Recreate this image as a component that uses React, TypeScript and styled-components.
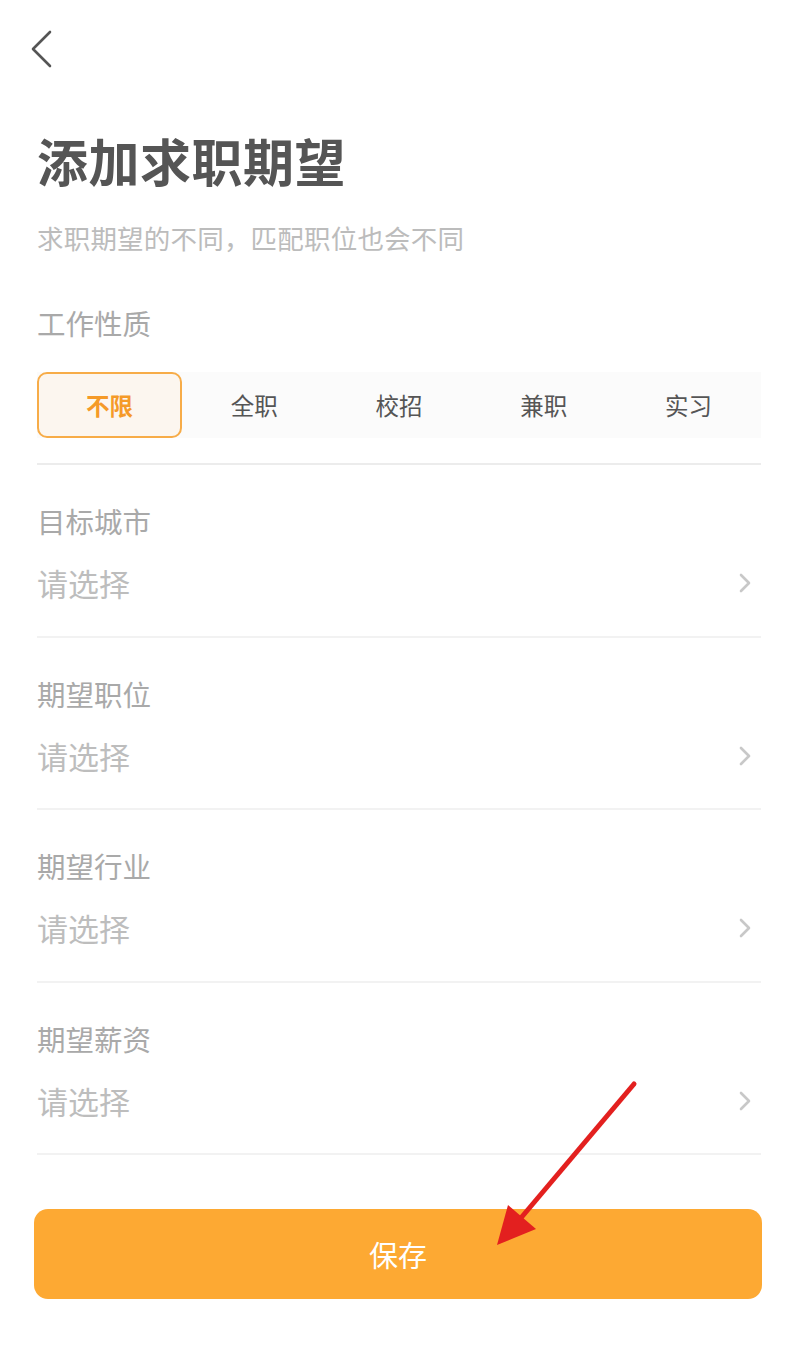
import React from 'react';
import styled, { createGlobalStyle } from 'styled-components';

const GlobalStyle = createGlobalStyle`
  html, body {
    margin: 0;
    padding: 0;
    background: #fff;
  }
  body {
    font-family: "Noto Sans CJK SC", "Noto Sans", sans-serif;
  }
`;

const Page = styled.div`
  position: relative;
  width: 790px;
  min-height: 1354px;
  box-sizing: border-box;
  padding: 0 28px 0 37px;
  background: #fff;
`;

const Header = styled.div`
  height: 100px;
  display: flex;
  align-items: center;
  margin-left: -8px;
`;

const BackButton = styled.button`
  border: 0;
  background: none;
  padding: 0;
  width: 24px;
  height: 44px;
  display: flex;
  align-items: center;
  justify-content: center;
  color: #555;
  margin-top: -2px;
`;

const Title = styled.h1`
  margin: 29px 0 0;
  font-size: 51px;
  line-height: 62px;
  font-weight: 700;
  color: #555;
  letter-spacing: 0.5px;
`;

const Subtitle = styled.p`
  margin: 31px 0 0;
  font-size: 26.5px;
  line-height: 32px;
  color: #bcbcbc;
  letter-spacing: 0.2px;
`;

const Label = styled.div`
  font-size: 28.5px;
  line-height: 34px;
  color: #a9a9a9;
`;

const TypeLabel = styled(Label)`
  margin-top: 52px;
`;

const ChipRow = styled.div`
  margin-top: 32px;
  display: grid;
  grid-template-columns: repeat(5, 1fr);
  background: #fbfbfb;
  width: 724px;
`;

const Chip = styled.div<{ $active?: boolean }>`
  height: 66px;
  box-sizing: border-box;
  display: flex;
  align-items: center;
  justify-content: center;
  font-size: 23.5px;
  border-radius: 10px;
  border: 2px solid ${p => (p.$active ? '#f7ac48' : 'transparent')};
  background: ${p => (p.$active ? '#fcf6ef' : 'transparent')};
  color: ${p => (p.$active ? '#f59a28' : '#555')};
  font-weight: ${p => (p.$active ? 700 : 400)};
`;

const Divider = styled.div`
  height: 2px;
  background: #ececec;
  width: 724px;
`;

const TypeDivider = styled(Divider)`
  margin-top: 25px;
`;

const Field = styled.div`
  height: 172.5px;
  box-sizing: border-box;
  padding-top: 39px;
  display: flex;
  flex-direction: column;
  border-bottom: 2px solid #f2f2f2;
  width: 724px;
`;

const SelectRow = styled.div`
  margin-top: 26px;
  display: flex;
  align-items: center;
  justify-content: space-between;
  padding-right: 10px;
`;

const Placeholder = styled.span`
  font-size: 31px;
  line-height: 38px;
  color: #bdbdbd;
`;

const SaveButton = styled.button`
  margin: 54px 0 0 -3px;
  width: 728px;
  height: 90px;
  border: 0;
  border-radius: 14px;
  background: #fda933;
  color: #fff;
  font-family: inherit;
  font-size: 29px;
  display: flex;
  align-items: center;
  justify-content: center;
`;

const Annotation = styled.svg`
  position: absolute;
  left: 0;
  top: 0;
  pointer-events: none;
`;

const ChevronLeft = () => (
  <svg width="24" height="40" viewBox="0 0 24 40" fill="none">
    <path d="M21 3 L4 20 L21 37" stroke="currentColor" strokeWidth="2.6" strokeLinecap="round" strokeLinejoin="round" />
  </svg>
);

const ChevronRight = () => (
  <svg width="12" height="20" viewBox="0 0 12 20" fill="none">
    <path d="M2 2 L10 10 L2 18" stroke="#c8c8c8" strokeWidth="2.6" strokeLinecap="round" strokeLinejoin="round" />
  </svg>
);

const jobTypes = ['不限', '全职', '校招', '兼职', '实习'];
const fields = ['目标城市', '期望职位', '期望行业', '期望薪资'];

export default function App() {
  return (
    <>
      <GlobalStyle />
      <Page>
        <Header>
          <BackButton aria-label="返回">
            <ChevronLeft />
          </BackButton>
        </Header>
        <Title>添加求职期望</Title>
        <Subtitle>求职期望的不同，匹配职位也会不同</Subtitle>
        <TypeLabel>工作性质</TypeLabel>
        <ChipRow>
          {jobTypes.map((t, i) => (
            <Chip key={t} $active={i === 0}>{t}</Chip>
          ))}
        </ChipRow>
        <TypeDivider />
        {fields.map(f => (
          <Field key={f}>
            <Label>{f}</Label>
            <SelectRow>
              <Placeholder>请选择</Placeholder>
              <ChevronRight />
            </SelectRow>
          </Field>
        ))}
        <SaveButton>保存</SaveButton>
        <Annotation width="790" height="1354" viewBox="0 0 790 1354">
          <line x1="634" y1="1084" x2="515" y2="1225" stroke="#e3201f" strokeWidth="5" strokeLinecap="round" />
          <polygon points="497,1245 508,1205 536,1229" fill="#e3201f" />
        </Annotation>
      </Page>
    </>
  );
}
